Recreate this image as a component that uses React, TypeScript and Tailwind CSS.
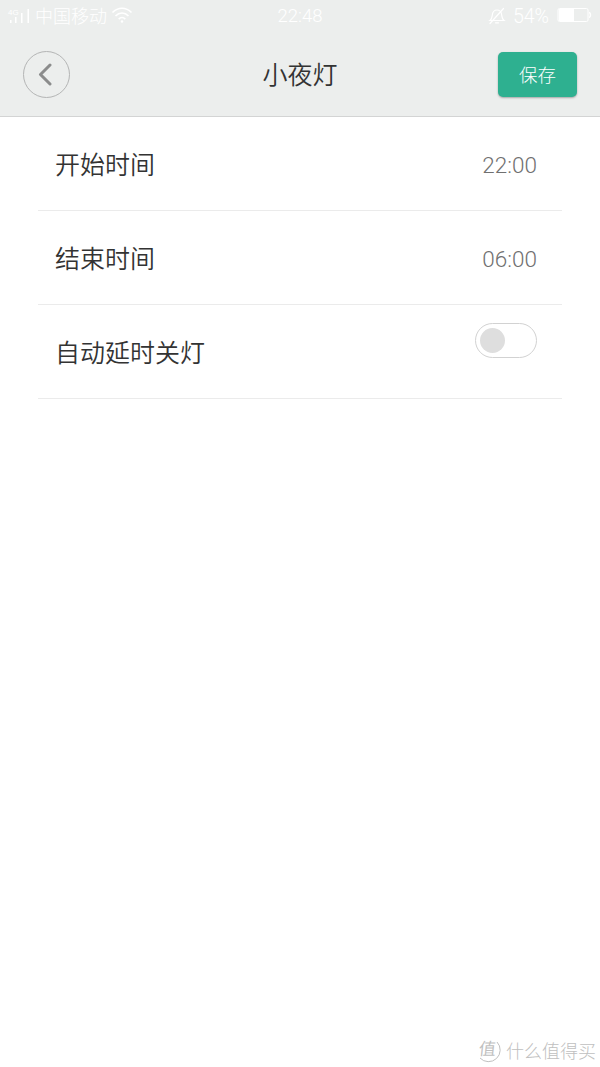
import type { ReactNode } from "react";

function SignalIcon() {
  return (
    <svg className="h-[20px] w-[26px]" viewBox="0 0 26 20" fill="#fff" aria-hidden="true">
      <text x="1" y="9" fontSize="8" fontFamily="Liberation Sans, sans-serif">
        4G
      </text>
      <rect x="3" y="14" width="1.500" height="3" />
      <rect x="8" y="11" width="1.500" height="6" />
      <rect x="14" y="7" width="1.500" height="10" />
      <rect x="20.500" y="3" width="1.500" height="14" />
    </svg>
  );
}

function WifiIcon() {
  return (
    <svg
      className="h-[18px] w-[22px]"
      viewBox="0 0 22 18"
      fill="none"
      stroke="#fff"
      strokeWidth="1.6"
      aria-hidden="true"
    >
      <path d="M1.500 6.500C7 .8 15 .8 20.500 6.500" />
      <path d="M4.500 10c3.800-4 9.200-4 13 0" />
      <path d="M7.700 13.100c2-2 4.600-2 6.600 0" />
      <circle cx="11" cy="15.500" r="1.200" fill="#fff" stroke="none" />
    </svg>
  );
}

function MutedBellIcon() {
  return (
    <svg
      className="h-[18px] w-[18px]"
      viewBox="0 0 18 18"
      fill="none"
      stroke="#fff"
      strokeWidth="1.2"
      strokeLinecap="round"
      aria-hidden="true"
    >
      <path d="M2 13.500c2-1.500 2-3 2.300-5.500C4.700 5 6.200 3 9 3s4.300 2 4.700 5c.3 2.500.3 4 2.300 5.500z" />
      <path d="M7.500 15.800h3M15.500 1.500l-13.500 15" />
    </svg>
  );
}

function BatteryIcon() {
  return (
    <svg className="-mt-[2px] h-[16px] w-[35px]" viewBox="0 0 35 16" fill="none" aria-hidden="true">
      <rect x="1" y="1.500" width="30" height="13" rx="1.500" stroke="#fff" />
      <rect x="2" y="2" width="15" height="12" fill="#fff" />
      <path d="M32 5.500c2 .5 2 4.500 0 5" stroke="#fff" strokeWidth="1.500" />
    </svg>
  );
}

function StatusBar() {
  return (
    <div className="grid h-8 grid-cols-[1fr_auto_1fr] items-center px-[7px] text-[18px] leading-none font-light text-white">
      <div className="flex items-center">
        <SignalIcon />
        <span className="ml-[2px] -mt-[2px]">中国移动</span>
        <span className="ml-[4px] -mt-[2px]">
          <WifiIcon />
        </span>
      </div>
      <span className="pt-px font-['Roboto',sans-serif] text-[18.500px]">22:48</span>
      <div className="flex items-center justify-end pr-px">
        <MutedBellIcon />
        <span className="ml-[7px] mr-[8px] pt-px font-['Roboto',sans-serif] text-[19.500px]">54%</span>
        <BatteryIcon />
      </div>
    </div>
  );
}

function Header() {
  return (
    <header className="h-[117px] border-b border-[#d3d4d4] bg-[#eceeed]">
      <StatusBar />
      <div className="grid grid-cols-[1fr_auto_1fr] items-center px-[23px] pt-[19px]">
        <button
          className="flex size-[47px] items-center justify-center rounded-full border border-[#b4b5b5]"
          aria-label="返回"
        >
          <svg
            className="-ml-[4px] -mt-px h-[24px] w-[16px]"
            viewBox="0 0 16 24"
            fill="none"
            stroke="#8b8c8c"
            strokeWidth="3"
            strokeLinecap="round"
            strokeLinejoin="round"
            aria-hidden="true"
          >
            <path d="M13 3 3.500 12.500 13 22" />
          </svg>
        </button>
        <h1 className="-mt-[2px] text-[25px] leading-none font-[350] text-[#333]">小夜灯</h1>
        <button className="h-[45px] w-[79px] justify-self-end rounded-[5px] bg-[#2eb090] text-[18.500px] font-light text-white shadow-[0_1px_2px_rgba(0,0,0,0.3)]">
          保存
        </button>
      </div>
    </header>
  );
}

function Row({ label, children }: { label: string; children: ReactNode }) {
  return (
    <li className="flex h-[94px] justify-between border-b border-[#ebebeb] pl-[17px] pr-[25px]">
      <span className="text-[25px] leading-[93px] font-[350] text-[#333]">{label}</span>
      {children}
    </li>
  );
}

function Time({ value }: { value: string }) {
  return (
    <span className="font-['Roboto',sans-serif] text-[22.500px] leading-[97px] font-light text-[#707070]">
      {value}
    </span>
  );
}

function Watermark() {
  return (
    <div className="flex items-center self-end pb-[4px] pr-[4px] font-light text-[#c0c0c0]">
      <span className="relative flex size-[26px] items-center justify-center">
        <svg
          className="absolute inset-0"
          viewBox="0 0 26 26"
          fill="none"
          stroke="currentColor"
          aria-hidden="true"
        >
          <path d="M21 5A11.500 11.500 0 0 1 4 21" />
        </svg>
        <span className="-mt-[5px] -ml-[3px] -skew-x-6 text-[17px] leading-none font-normal">值</span>
      </span>
      <span className="ml-[4px] -mt-px text-[18px] leading-none">什么值得买</span>
    </div>
  );
}

export default function App() {
  return (
    <div className="flex h-[1067px] w-[600px] flex-col overflow-hidden bg-white font-['Noto_Sans_CJK_SC',sans-serif]">
      <Header />
      <ul className="flex-1 px-[38px]">
        <Row label="开始时间">
          <Time value="22:00" />
        </Row>
        <Row label="结束时间">
          <Time value="06:00" />
        </Row>
        <Row label="自动延时关灯">
          <button
            role="switch"
            aria-checked="false"
            aria-label="自动延时关灯"
            className="mt-[18px] flex h-[35px] w-[62px] items-center rounded-full border border-[#d2d2d2] pl-[4px]"
          >
            <span className="size-[25px] rounded-full bg-[#dedede]" />
          </button>
        </Row>
      </ul>
      <Watermark />
    </div>
  );
}
